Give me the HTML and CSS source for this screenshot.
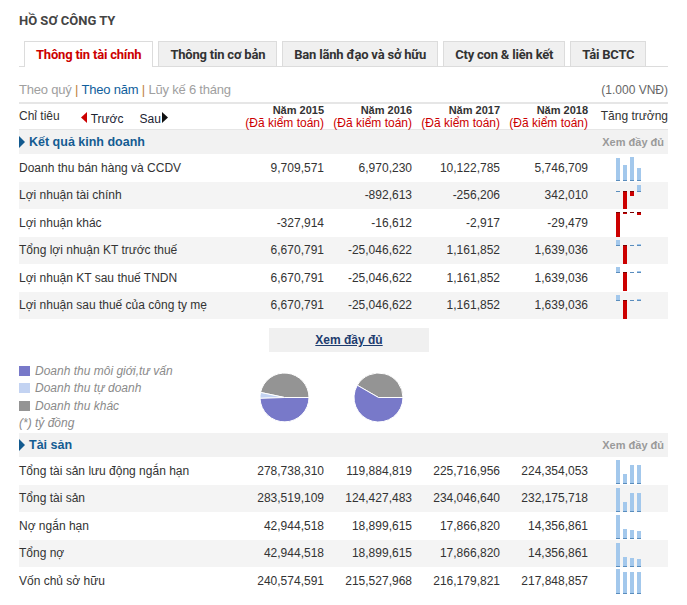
FILE: index.html
```html
<!DOCTYPE html>
<html lang="vi">
<head>
<meta charset="utf-8">
<title>Hồ sơ công ty</title>
<link rel="stylesheet" href="styles.css">
</head>
<body>
<div class="page">
  <h1 class="title">HỒ SƠ CÔNG TY</h1>
  <ul class="tabs">
    <li class="tab tab-active">Thông tin tài chính</li>
    <li class="tab">Thông tin cơ bản</li>
    <li class="tab">Ban lãnh đạo và sở hữu</li>
    <li class="tab">Cty con &amp; liên kết</li>
    <li class="tab">Tải BCTC</li>
  </ul>
  <div class="period">
    <div class="period-links"><span class="muted">Theo quý</span> <span class="sep">|</span> <span class="current">Theo năm</span> <span class="sep">|</span> <span class="muted">Lũy kế 6 tháng</span></div>
    <div class="unit">(1.000 VNĐ)</div>
  </div>

  <table class="fin">
    <colgroup><col class="w-label"><col class="w-num"><col class="w-num"><col class="w-num"><col class="w-num"><col class="w-growth"></colgroup>
    <thead>
      <tr class="head">
        <th class="c-label">
          <div class="head-label">
            <span>Chỉ tiêu</span>
            <span class="nav nav-prev"><svg class="tri" width="6" height="11" viewBox="0 0 6 11"><path d="M6 0 L0 5.5 L6 11 Z" fill="#cc0000"/></svg>Trước</span>
            <span class="nav nav-next">Sau<svg class="tri" width="6" height="11" viewBox="0 0 6 11"><path d="M0 0 L6 5.5 L0 11 Z" fill="#111"/></svg></span>
          </div>
        </th>
        <th class="c-num"><span class="year">Năm 2015</span><br><span class="audit">(Đã kiểm toán)</span></th>
        <th class="c-num"><span class="year">Năm 2016</span><br><span class="audit">(Đã kiểm toán)</span></th>
        <th class="c-num"><span class="year">Năm 2017</span><br><span class="audit">(Đã kiểm toán)</span></th>
        <th class="c-num"><span class="year">Năm 2018</span><br><span class="audit">(Đã kiểm toán)</span></th>
        <th class="c-growth">Tăng trưởng</th>
      </tr>
    </thead>
    <tbody>
      <tr class="section"><td colspan="5"><span class="section-title">Kết quả kinh doanh</span></td><td class="more">Xem đầy đủ</td></tr>
      <tr class="row">
        <td>Doanh thu bán hàng và CCDV</td><td class="num">9,709,571</td><td class="num">6,970,230</td><td class="num">10,122,785</td><td class="num">5,746,709</td>
        <td class="spark-cell"><svg class="spark" width="25" height="27" viewBox="0 0 25 27">
          <rect x="0" y="4" width="4" height="23" fill="#a3c8ec"/><rect x="0" y="26" width="4" height="1" fill="#5a8dbd"/>
          <rect x="7" y="11" width="4" height="16" fill="#a3c8ec"/><rect x="7" y="26" width="4" height="1" fill="#5a8dbd"/>
          <rect x="14" y="3" width="4" height="24" fill="#a3c8ec"/><rect x="14" y="26" width="4" height="1" fill="#5a8dbd"/>
          <rect x="21" y="14" width="4" height="13" fill="#a3c8ec"/><rect x="21" y="26" width="4" height="1" fill="#5a8dbd"/>
        </svg></td>
      </tr>
      <tr class="row">
        <td>Lợi nhuận tài chính</td><td class="num"></td><td class="num">-892,613</td><td class="num">-256,206</td><td class="num">342,010</td>
        <td class="spark-cell"><svg class="spark" width="25" height="27" viewBox="0 0 25 27">
          <rect x="0" y="9" width="4" height="1" fill="#5a8dbd"/>
          <rect x="7" y="9" width="4" height="18" fill="#cc0000"/><rect x="7" y="9" width="4" height="1" fill="#7a0000"/>
          <rect x="14" y="9" width="4" height="5" fill="#cc0000"/><rect x="14" y="9" width="4" height="1" fill="#7a0000"/>
          <rect x="21" y="3" width="4" height="7" fill="#a3c8ec"/><rect x="21" y="9" width="4" height="1" fill="#5a8dbd"/>
        </svg></td>
      </tr>
      <tr class="row">
        <td>Lợi nhuận khác</td><td class="num">-327,914</td><td class="num">-16,612</td><td class="num">-2,917</td><td class="num">-29,479</td>
        <td class="spark-cell"><svg class="spark" width="25" height="27" viewBox="0 0 25 27">
          <rect x="0" y="3" width="4" height="25" fill="#cc0000"/><rect x="0" y="3" width="4" height="1" fill="#7a0000"/>
          <rect x="7" y="3" width="4" height="2" fill="#cc0000"/><rect x="7" y="3" width="4" height="1" fill="#7a0000"/>
          <rect x="14" y="3" width="4" height="1" fill="#7a0000"/>
          <rect x="21" y="3" width="4" height="3" fill="#cc0000"/><rect x="21" y="3" width="4" height="1" fill="#7a0000"/>
        </svg></td>
      </tr>
      <tr class="row">
        <td>Tổng lợi nhuận KT trước thuế</td><td class="num">6,670,791</td><td class="num">-25,046,622</td><td class="num">1,161,852</td><td class="num">1,639,036</td>
        <td class="spark-cell"><svg class="spark" width="25" height="27" viewBox="0 0 25 27">
          <rect x="0" y="3" width="4" height="6" fill="#a3c8ec"/><rect x="0" y="8" width="4" height="1" fill="#5a8dbd"/>
          <rect x="7" y="8" width="4" height="19" fill="#cc0000"/><rect x="7" y="8" width="4" height="1" fill="#7a0000"/>
          <rect x="14" y="8" width="4" height="1" fill="#5a8dbd"/>
          <rect x="21" y="7" width="4" height="2" fill="#a3c8ec"/><rect x="21" y="8" width="4" height="1" fill="#5a8dbd"/>
        </svg></td>
      </tr>
      <tr class="row">
        <td>Lợi nhuận KT sau thuế TNDN</td><td class="num">6,670,791</td><td class="num">-25,046,622</td><td class="num">1,161,852</td><td class="num">1,639,036</td>
        <td class="spark-cell"><svg class="spark" width="25" height="27" viewBox="0 0 25 27">
          <rect x="0" y="3" width="4" height="6" fill="#a3c8ec"/><rect x="0" y="8" width="4" height="1" fill="#5a8dbd"/>
          <rect x="7" y="8" width="4" height="19" fill="#cc0000"/><rect x="7" y="8" width="4" height="1" fill="#7a0000"/>
          <rect x="14" y="8" width="4" height="1" fill="#5a8dbd"/>
          <rect x="21" y="7" width="4" height="2" fill="#a3c8ec"/><rect x="21" y="8" width="4" height="1" fill="#5a8dbd"/>
        </svg></td>
      </tr>
      <tr class="row">
        <td>Lợi nhuận sau thuế của công ty mẹ</td><td class="num">6,670,791</td><td class="num">-25,046,622</td><td class="num">1,161,852</td><td class="num">1,639,036</td>
        <td class="spark-cell"><svg class="spark" width="25" height="27" viewBox="0 0 25 27">
          <rect x="0" y="3" width="4" height="6" fill="#a3c8ec"/><rect x="0" y="8" width="4" height="1" fill="#5a8dbd"/>
          <rect x="7" y="8" width="4" height="19" fill="#cc0000"/><rect x="7" y="8" width="4" height="1" fill="#7a0000"/>
          <rect x="14" y="8" width="4" height="1" fill="#5a8dbd"/>
          <rect x="21" y="7" width="4" height="2" fill="#a3c8ec"/><rect x="21" y="8" width="4" height="1" fill="#5a8dbd"/>
        </svg></td>
      </tr>
    </tbody>
  </table>

  <a class="more-btn" href="#">Xem đầy đủ</a>

  <div class="chart">
    <ul class="legend">
      <li><span class="swatch sw-purple"></span>Doanh thu môi giới,tư vấn</li>
      <li><span class="swatch sw-light"></span>Doanh thu tự doanh</li>
      <li><span class="swatch sw-gray"></span>Doanh thu khác</li>
      <li>(*) tỷ đồng</li>
    </ul>
    <div class="pies">
      <svg class="pie" width="49" height="49" viewBox="0 0 49 49">
        <path d="M24.5 24.5 L49 24.5 A24.5 24.5 0 0 0 0.54 19.41 Z" fill="#949494" stroke="#fff" stroke-width="1"/>
        <path d="M24.5 24.5 L0.54 19.41 A24.5 24.5 0 0 0 0.02 25.35 Z" fill="#c3d3f2" stroke="#fff" stroke-width="1"/>
        <path d="M24.5 24.5 L0.02 25.35 A24.5 24.5 0 0 0 49 24.5 Z" fill="#7879c9" stroke="#fff" stroke-width="1"/>
      </svg>
      <svg class="pie" width="49" height="49" viewBox="0 0 49 49">
        <path d="M24.5 24.5 L49 24.5 A24.5 24.5 0 0 0 3.28 12.25 Z" fill="#949494" stroke="#fff" stroke-width="1"/>
        <path d="M24.5 24.5 L3.28 12.25 A24.5 24.5 0 1 0 49 24.5 Z" fill="#7879c9" stroke="#fff" stroke-width="1"/>
      </svg>
    </div>
  </div>

  <table class="fin fin-assets">
    <colgroup><col class="w-label"><col class="w-num"><col class="w-num"><col class="w-num"><col class="w-num"><col class="w-growth"></colgroup>
    <tbody>
      <tr class="section"><td colspan="5"><span class="section-title">Tài sản</span></td><td class="more">Xem đầy đủ</td></tr>
      <tr class="row">
        <td>Tổng tài sản lưu động ngắn hạn</td><td class="num">278,738,310</td><td class="num">119,884,819</td><td class="num">225,716,956</td><td class="num">224,354,053</td>
        <td class="spark-cell"><svg class="spark" width="25" height="27" viewBox="0 0 25 27">
          <rect x="0" y="3" width="4" height="24" fill="#a3c8ec"/><rect x="0" y="26" width="4" height="1" fill="#5a8dbd"/>
          <rect x="7" y="17" width="4" height="10" fill="#a3c8ec"/><rect x="7" y="26" width="4" height="1" fill="#5a8dbd"/>
          <rect x="14" y="8" width="4" height="19" fill="#a3c8ec"/><rect x="14" y="26" width="4" height="1" fill="#5a8dbd"/>
          <rect x="21" y="8" width="4" height="19" fill="#a3c8ec"/><rect x="21" y="26" width="4" height="1" fill="#5a8dbd"/>
        </svg></td>
      </tr>
      <tr class="row">
        <td>Tổng tài sản</td><td class="num">283,519,109</td><td class="num">124,427,483</td><td class="num">234,046,640</td><td class="num">232,175,718</td>
        <td class="spark-cell"><svg class="spark" width="25" height="27" viewBox="0 0 25 27">
          <rect x="0" y="3" width="4" height="24" fill="#a3c8ec"/><rect x="0" y="26" width="4" height="1" fill="#5a8dbd"/>
          <rect x="7" y="17" width="4" height="10" fill="#a3c8ec"/><rect x="7" y="26" width="4" height="1" fill="#5a8dbd"/>
          <rect x="14" y="8" width="4" height="19" fill="#a3c8ec"/><rect x="14" y="26" width="4" height="1" fill="#5a8dbd"/>
          <rect x="21" y="8" width="4" height="19" fill="#a3c8ec"/><rect x="21" y="26" width="4" height="1" fill="#5a8dbd"/>
        </svg></td>
      </tr>
      <tr class="row">
        <td>Nợ ngắn hạn</td><td class="num">42,944,518</td><td class="num">18,899,615</td><td class="num">17,866,820</td><td class="num">14,356,861</td>
        <td class="spark-cell"><svg class="spark" width="25" height="27" viewBox="0 0 25 27">
          <rect x="0" y="3" width="4" height="24" fill="#a3c8ec"/><rect x="0" y="26" width="4" height="1" fill="#5a8dbd"/>
          <rect x="7" y="17" width="4" height="10" fill="#a3c8ec"/><rect x="7" y="26" width="4" height="1" fill="#5a8dbd"/>
          <rect x="14" y="18" width="4" height="9" fill="#a3c8ec"/><rect x="14" y="26" width="4" height="1" fill="#5a8dbd"/>
          <rect x="21" y="19" width="4" height="8" fill="#a3c8ec"/><rect x="21" y="26" width="4" height="1" fill="#5a8dbd"/>
        </svg></td>
      </tr>
      <tr class="row">
        <td>Tổng nợ</td><td class="num">42,944,518</td><td class="num">18,899,615</td><td class="num">17,866,820</td><td class="num">14,356,861</td>
        <td class="spark-cell"><svg class="spark" width="25" height="27" viewBox="0 0 25 27">
          <rect x="0" y="3" width="4" height="24" fill="#a3c8ec"/><rect x="0" y="26" width="4" height="1" fill="#5a8dbd"/>
          <rect x="7" y="17" width="4" height="10" fill="#a3c8ec"/><rect x="7" y="26" width="4" height="1" fill="#5a8dbd"/>
          <rect x="14" y="18" width="4" height="9" fill="#a3c8ec"/><rect x="14" y="26" width="4" height="1" fill="#5a8dbd"/>
          <rect x="21" y="19" width="4" height="8" fill="#a3c8ec"/><rect x="21" y="26" width="4" height="1" fill="#5a8dbd"/>
        </svg></td>
      </tr>
      <tr class="row">
        <td>Vốn chủ sở hữu</td><td class="num">240,574,591</td><td class="num">215,527,968</td><td class="num">216,179,821</td><td class="num">217,848,857</td>
        <td class="spark-cell"><svg class="spark" width="25" height="27" viewBox="0 0 25 27">
          <rect x="0" y="2" width="4" height="25" fill="#a3c8ec"/><rect x="0" y="26" width="4" height="1" fill="#5a8dbd"/>
          <rect x="7" y="5" width="4" height="22" fill="#a3c8ec"/><rect x="7" y="26" width="4" height="1" fill="#5a8dbd"/>
          <rect x="14" y="5" width="4" height="22" fill="#a3c8ec"/><rect x="14" y="26" width="4" height="1" fill="#5a8dbd"/>
          <rect x="21" y="5" width="4" height="22" fill="#a3c8ec"/><rect x="21" y="26" width="4" height="1" fill="#5a8dbd"/>
        </svg></td>
      </tr>
    </tbody>
  </table>
</div>
</body>
</html>
```

FILE: styles.css
```css
* { box-sizing: border-box; }

body {
  margin: 0;
  font-family: "Liberation Sans", Arial, sans-serif;
  font-size: 12px;
  color: #333;
  background: #fff;
}

.page {
  width: 687px;
  padding: 0 19px;
}

.title {
  margin: 0;
  padding-top: 13px;
  font-family: Roboto, "Liberation Sans", sans-serif;
  font-size: 13px;
  font-weight: 700;
  line-height: 16px;
  color: #444;
}

.tabs {
  list-style: none;
  margin: 12px 0 0;
  padding: 0 0 0 5px;
  display: flex;
  align-items: flex-start;
  gap: 5px;
  height: 26px;
  border-bottom: 1px solid #dcdcdc;
}

.tab {
  height: 25px;
  padding: 0 11px;
  border: 1px solid #dcdcdc;
  border-bottom: 0;
  background: #f0f0f0;
  font-family: Roboto, "Liberation Sans", sans-serif;
  font-size: 13px;
  font-weight: 700;
  letter-spacing: -0.2px;
  line-height: 25px;
  color: #333;
  white-space: nowrap;
}

.tab-active {
  height: 26px;
  background: #fff;
  color: #cc0000;
}

.period {
  display: flex;
  justify-content: space-between;
  align-items: center;
  height: 35px;
  padding-top: 10px;
}

.period-links {
  font-size: 13px;
  letter-spacing: -0.2px;
}

.muted { color: #a0a0a0; }
.sep { color: #c0823a; }
.current { color: #0f5e9c; }

.unit {
  color: #666;
  font-size: 12px;
}

.fin {
  width: 649px;
  border-collapse: separate;
  border-spacing: 0;
  table-layout: fixed;
}

.fin td,
.fin th {
  padding: 0;
}

.w-label { width: 217px; }
.w-num { width: 88px; }
.w-growth { width: 80px; }

.head th {
  border-top: 2px solid #e6e6e6;
  border-bottom: 1px solid #e6e6e6;
  height: 28px;
  line-height: 12.5px;
  font-weight: normal;
  vertical-align: middle;
}

.c-label { text-align: left; }
.c-num { text-align: right; }
.c-growth { text-align: right; color: #333; }

.head-label {
  display: flex;
  align-items: center;
}

.nav {
  display: flex;
  align-items: center;
  margin-top: 5px;
  color: #1c2433;
}

.nav-prev { margin-left: 21px; }
.nav-prev .tri { margin-right: 4px; margin-top: -4px; }
.nav-next { margin-left: 16px; }
.nav-next .tri { margin-left: 1px; margin-top: -4px; }

.year {
  font-weight: 700;
  font-size: 11px;
  color: #333;
}

.audit {
  color: #cc0000;
  font-size: 12px;
}

.section {
  background: #f2f2f2;
  height: 24px;
}

.section-title {
  display: flex;
  align-items: center;
  font-weight: 700;
  font-size: 12.5px;
  color: #145c92;
}

.section-title::before {
  content: "";
  width: 0;
  height: 0;
  border-left: 6px solid #135a8f;
  border-top: 6px solid transparent;
  border-bottom: 6px solid transparent;
  margin-right: 4px;
}

.more {
  text-align: right;
  padding-right: 4px !important;
  font-weight: 700;
  font-size: 11px;
  color: #9a9a9a;
}

.row { height: 27.5px; }
.row:nth-child(odd) { background: #f4f4f4; }

.num { text-align: right; }

.spark-cell { vertical-align: top; }

.spark {
  display: block;
  margin-left: 28px;
  overflow: visible;
}

.more-btn {
  display: block;
  width: 160px;
  height: 24px;
  margin: 9px 0 0 250px;
  background: #f0f0f0;
  text-align: center;
  line-height: 24px;
  font-weight: 700;
  font-size: 12px;
  color: #1d3c6e;
  text-decoration: underline;
}

.chart {
  display: flex;
  height: 70px;
  margin-top: 10px;
}

.legend {
  list-style: none;
  margin: 0;
  padding: 0;
  width: 241px;
}

.legend li {
  display: flex;
  align-items: center;
  height: 17.5px;
  font-style: italic;
  color: #8a8a8a;
}

.swatch {
  width: 11px;
  height: 10px;
  margin-right: 5px;
}

.sw-purple { background: #7879c9; }
.sw-light { background: #c3d3f2; }
.sw-gray { background: #949494; }

.pies {
  display: flex;
  gap: 45px;
  padding-top: 11px;
}

.pie { display: block; }

.fin-assets { margin-top: 1px; }
```
